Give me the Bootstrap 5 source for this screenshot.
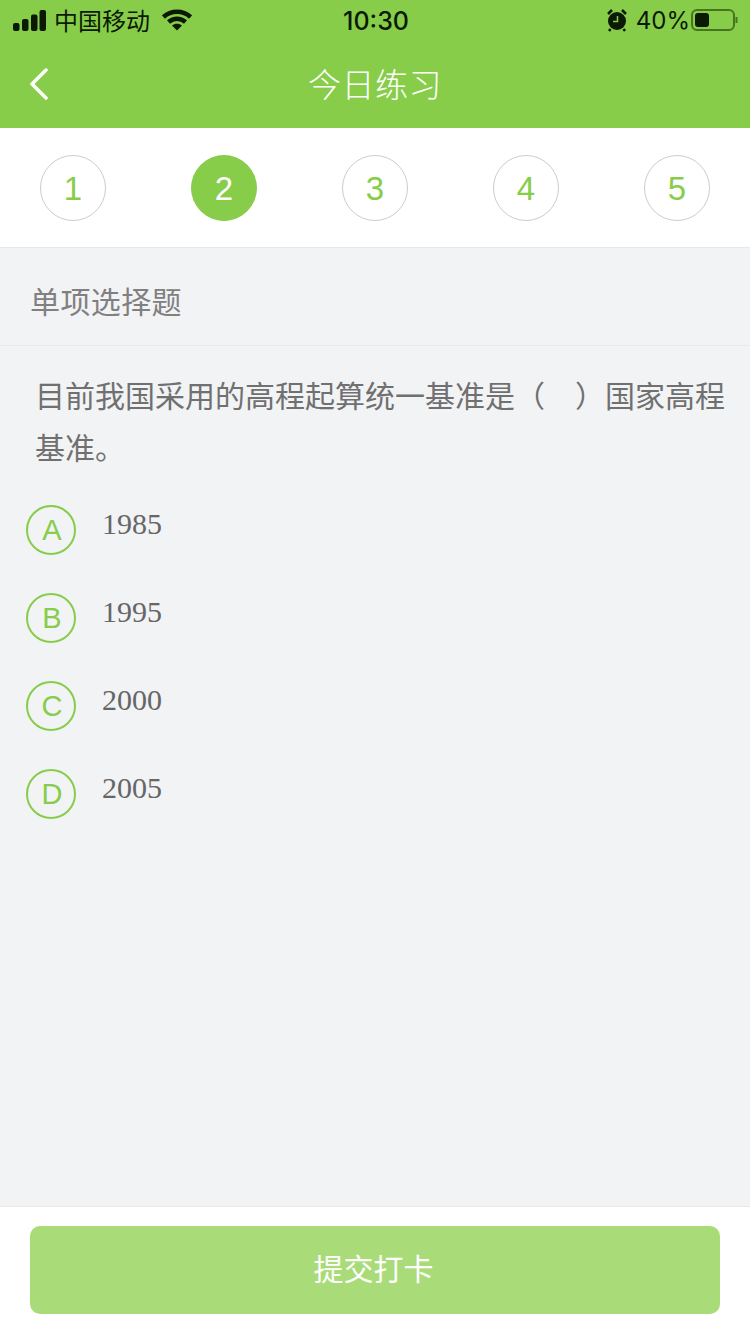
<!DOCTYPE html>
<html lang="zh">
<head>
<meta charset="utf-8">
<title>今日练习</title>
<link href="https://cdn.jsdelivr.net/npm/bootstrap@5.3.0/dist/css/bootstrap.min.css" rel="stylesheet">
<style>
html,body{height:1334px;overflow:hidden}
body{width:750px;background:#f2f3f5;font-family:"Liberation Sans","Noto Sans CJK SC",sans-serif;color:#666}
.app-frame{width:750px;height:1334px}
.top-band{background:#87cd4a;height:128px}
.status-row{height:40px;padding:0 11px 0 13px;color:#0c1a05}
.status-side{width:290px}
.carrier{font-size:24px;line-height:40px;font-family:"Noto Sans CJK SC",sans-serif;margin-left:8px;margin-right:12px}
.clock{font-size:25px;font-weight:500;line-height:40px;padding-top:2px;font-family:"Inter",sans-serif}
.pct{font-size:24px;line-height:40px;padding-top:2px;margin:0 1px 0 8px;font-family:"Inter",sans-serif}
.title-row{height:88px;padding-bottom:2px}
.page-title{color:#fff;font-size:33px;line-height:40px;font-family:"Noto Sans CJK SC",sans-serif;font-weight:300;letter-spacing:.5px}
.back-link{left:28px;top:68px;width:24px;height:32px}
.steps{background:#fff;height:120px;padding:27px 40px 0;border-bottom:1px solid #e8e8e8}
.step-dot{width:66px;height:66px;border:1px solid #ccc;border-radius:50%;color:#87cd4a;font-size:33px;padding-top:2px}
.step-dot.on{background:#87cd4a;border-color:#87cd4a;color:#fff}
.q-type{height:98px;padding:8px 30px 0;font-size:30px;letter-spacing:.4px;color:#808080;border-bottom:1px solid #e9eaec;font-family:"Noto Sans CJK SC",sans-serif;font-weight:400}
.q-text{font-size:30px;line-height:52px;padding:22px 20px 0 35px;color:#707070;font-family:"Noto Sans CJK SC",sans-serif;font-weight:400}
.opts{padding:33px 0 0 26px;gap:38px}
.opt-row{height:50px}
.opt-mark{width:50px;height:50px;border:2px solid #87cd4a;border-radius:50%;color:#87cd4a;font-size:29px;padding:2px 0 0 2px}
.opt-val{font-family:"Liberation Serif",serif;font-size:30px;line-height:36px;color:#666;margin-left:26px;margin-top:1px;width:60px;text-align:center}
.foot-bar{background:#fff;height:128px;border-top:1px solid #e8e8e8;padding:19px 30px 0}
.submit-btn{width:690px;height:88px;padding:0 3px 5px 0;background:#a9dc78;border:0;border-radius:10px;color:#fff;font-size:30px;font-weight:400;font-family:"Noto Sans CJK SC",sans-serif}
.submit-btn:hover,.submit-btn:disabled{background:#a9dc78;color:#fff;opacity:1}
</style>
</head>
<body>
<div class="app-frame d-flex flex-column">
  <header class="top-band position-relative flex-shrink-0">
    <div class="status-row d-flex align-items-center justify-content-between">
      <div class="status-side d-flex align-items-center">
        <svg width="33" height="21" viewBox="0 0 33 21" aria-hidden="true"><g fill="#0c1a05"><rect x="0" y="13" width="6.500" height="8" rx="2"/><rect x="9" y="9" width="6.500" height="12" rx="2"/><rect x="18" y="4.500" width="6.500" height="16.500" rx="2"/><rect x="26.500" y="0" width="6.500" height="21" rx="2"/></g></svg>
        <span class="carrier">中国移动</span>
        <svg width="30" height="22" viewBox="0 0 30 22" aria-hidden="true"><path d="M1.500 8C9 1 21 1 28.500 8" fill="none" stroke="#0c1a05" stroke-width="4.500"/><path d="M6.500 13C11.500 8.500 18.500 8.500 23.500 13" fill="none" stroke="#0c1a05" stroke-width="4.500"/><path d="M10 16.500C13 14 17 14 20 16.500L15 21.500Z" fill="#0c1a05"/></svg>
      </div>
      <span class="clock">10:30</span>
      <div class="status-side d-flex align-items-center justify-content-end">
        <svg width="22" height="24" viewBox="0 0 22 24" aria-hidden="true"><circle cx="11" cy="13" r="9" fill="#0c1a05"/><path d="M2 6 6 2M20 6 16 2M4.500 21 3 23M17.500 21 19 23" stroke="#0c1a05" stroke-width="2.500" fill="none"/><path d="M11.500 8v5.500H7" stroke="#87cd4a" stroke-width="1.500" fill="none"/></svg>
        <span class="pct">40%</span>
        <svg width="48" height="24" viewBox="0 0 48 24" aria-hidden="true"><rect x="1" y="2" width="42" height="20" rx="5" fill="none" stroke="#47751f" stroke-width="2"/><rect x="4" y="5" width="14" height="14" rx="3" fill="#0c1a05"/><path d="M45.500 9v6" stroke="#47751f" stroke-width="2" fill="none"/></svg>
      </div>
    </div>
    <div class="title-row d-flex align-items-center justify-content-center">
      <span class="page-title">今日练习</span>
    </div>
    <svg class="back-link position-absolute" viewBox="0 0 24 32" aria-hidden="true"><path d="M18 2 4 16l14 14" fill="none" stroke="#fff" stroke-width="3.500" stroke-linecap="round" stroke-linejoin="round"/></svg>
  </header>

  <nav class="steps d-flex justify-content-between flex-shrink-0">
    <div class="step-dot d-flex align-items-center justify-content-center">1</div>
    <div class="step-dot on d-flex align-items-center justify-content-center">2</div>
    <div class="step-dot d-flex align-items-center justify-content-center">3</div>
    <div class="step-dot d-flex align-items-center justify-content-center">4</div>
    <div class="step-dot d-flex align-items-center justify-content-center">5</div>
  </nav>

  <main class="flex-grow-1">
    <div class="q-type d-flex align-items-center">单项选择题</div>
    <div class="q-text">目前我国采用的高程起算统一基准是（　）国家高程基准。</div>
    <div class="opts d-flex flex-column">
      <div class="opt-row d-flex align-items-start"><span class="opt-mark d-flex align-items-center justify-content-center">A</span><span class="opt-val">1985</span></div>
      <div class="opt-row d-flex align-items-start"><span class="opt-mark d-flex align-items-center justify-content-center">B</span><span class="opt-val">1995</span></div>
      <div class="opt-row d-flex align-items-start"><span class="opt-mark d-flex align-items-center justify-content-center">C</span><span class="opt-val">2000</span></div>
      <div class="opt-row d-flex align-items-start"><span class="opt-mark d-flex align-items-center justify-content-center">D</span><span class="opt-val">2005</span></div>
    </div>
  </main>

  <footer class="foot-bar flex-shrink-0">
    <button type="button" class="btn submit-btn d-flex align-items-center justify-content-center">提交打卡</button>
  </footer>
</div>
<script src="https://cdn.jsdelivr.net/npm/bootstrap@5.3.0/dist/js/bootstrap.bundle.min.js"></script>
</body>
</html>
